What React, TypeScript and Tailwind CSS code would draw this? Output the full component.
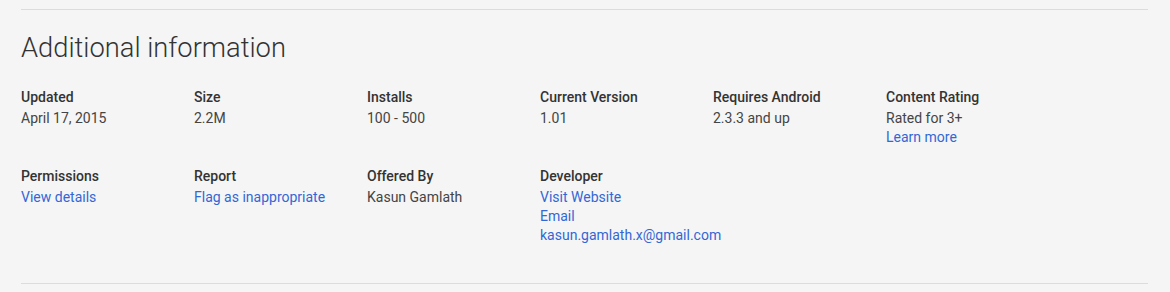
const info = [
  { label: "Updated", lines: [{ text: "April 17, 2015" }] },
  { label: "Size", lines: [{ text: "2.2M" }] },
  { label: "Installs", lines: [{ text: "100 - 500" }] },
  { label: "Current Version", lines: [{ text: "1.01" }] },
  { label: "Requires Android", lines: [{ text: "2.3.3 and up" }] },
  {
    label: "Content Rating",
    lines: [{ text: "Rated for 3+" }, { text: "Learn more", link: true }],
  },
  { label: "Permissions", lines: [{ text: "View details", link: true }] },
  { label: "Report", lines: [{ text: "Flag as inappropriate", link: true }] },
  { label: "Offered By", lines: [{ text: "Kasun Gamlath" }] },
  {
    label: "Developer",
    lines: [
      { text: "Visit Website", link: true },
      { text: "Email", link: true },
      { text: "kasun.gamlath.x@gmail.com", link: true },
    ],
  },
]

export default function App() {
  return (
    <div className="min-h-screen bg-[#f5f5f5] pt-[9px] pl-[21px] pr-[22px] font-['Roboto',sans-serif] text-[#333]">
      <div className="h-px bg-[#dcdcdc]" />

      <h2 className="mt-[20px] text-[27.3px] font-light leading-[36px] text-[#333]">
        Additional information
      </h2>

      <div className="mt-[20px] grid grid-cols-[repeat(6,173px)] gap-y-[18px]">
        {info.map((item) => (
          <div key={item.label}>
            <div className="text-[14px] font-medium leading-[23px] text-[#333]">{item.label}</div>
            {item.lines.map((line) =>
              line.link ? (
                <a key={line.text} href="#" className="block text-[14px] leading-[19px] text-[#3367d6]">
                  {line.text}
                </a>
              ) : (
                <div key={line.text} className="text-[14px] leading-[19px] text-[#444]">
                  {line.text}
                </div>
              )
            )}
          </div>
        ))}
      </div>

      <div className="mt-[38px] h-px bg-[#dcdcdc]" />
    </div>
  )
}
